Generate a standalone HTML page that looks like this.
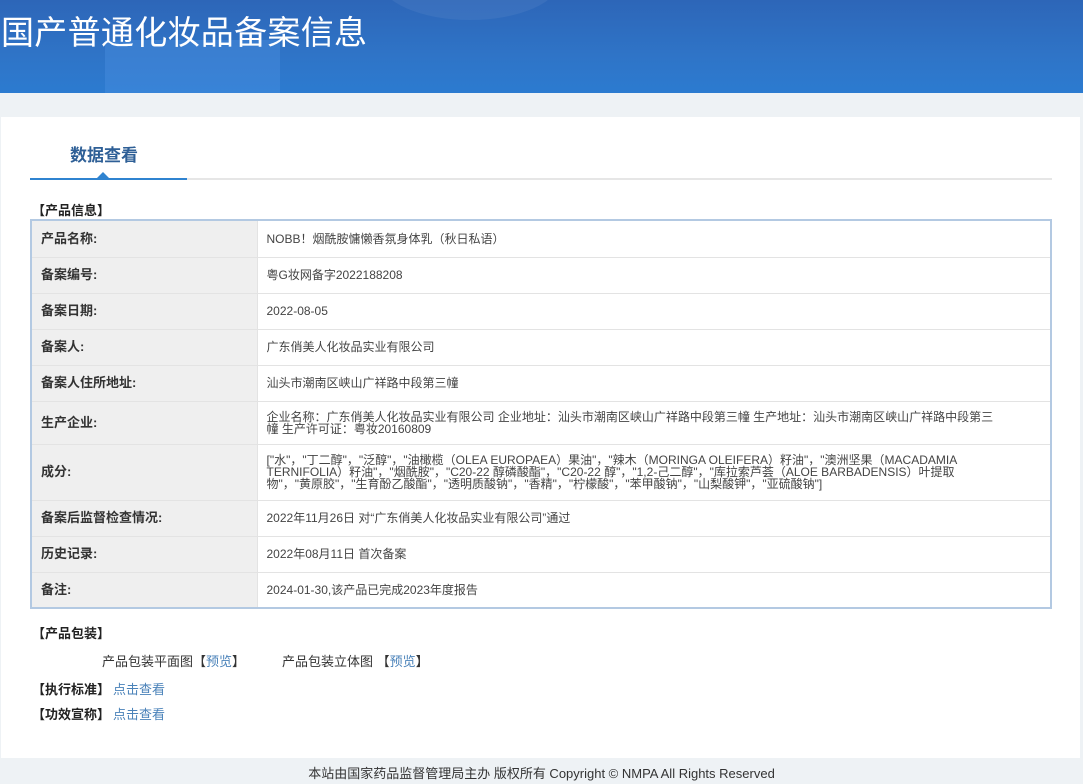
<!DOCTYPE html>
<html><head><meta charset="utf-8"><style>
*{margin:0;padding:0;box-sizing:border-box}
body{width:1083px;height:784px;overflow:hidden;background:#eef2f5;font-family:"Liberation Sans","Noto Sans CJK SC",sans-serif;color:#333;position:relative}
.hd{position:absolute;left:0;top:0;width:1083px;height:93px;background:linear-gradient(180deg,#2d66b8 0%,#2f74c7 60%,#2c7bd0 100%);overflow:hidden}
.hd .b1{position:absolute;left:105px;top:40px;width:175px;height:60px;background:rgba(80,150,230,.35)}
.hd .b2{position:absolute;left:380px;top:-60px;width:180px;height:80px;border-radius:50%;background:rgba(255,255,255,.06)}
.hd h1{position:absolute;left:1px;top:6px;font-size:33px;font-weight:normal;color:#fff;letter-spacing:0.3px;font-family:"Noto Sans CJK SC",sans-serif}
.card{position:absolute;left:1px;top:117px;width:1079px;height:641px;background:#fff}
.tab{position:absolute;left:70px;top:141px;font-size:17px;font-weight:bold;color:#2e5f96;font-family:"Noto Sans CJK SC",sans-serif}
.ln{position:absolute;left:30px;top:178px;width:1022px;height:2px;background:#e6e6e6}
.ln2{position:absolute;left:30px;top:178px;width:157px;height:2px;background:#2f83d0}
.tri{position:absolute;left:97px;top:172px;width:0;height:0;border-left:6px solid transparent;border-right:6px solid transparent;border-bottom:6px solid #2f83d0}
.sec{position:absolute;left:32px;font-size:13px;line-height:16px;font-weight:bold;color:#222}
table{position:absolute;left:30px;top:219px;width:1022px;border-collapse:collapse;border:2px solid #b3c9e2;font-size:12px}
td{border-bottom:1px solid #e3e3e3;padding:0 9px;vertical-align:middle;line-height:12px}
td.l{width:226px;background:#efefef;font-weight:bold;color:#333;font-size:13px;border-right:1px solid #e3e3e3}
td.v{color:#444;padding-right:52px}
.t{position:absolute;font-size:13px;color:#333}
a{color:#4a82b9;text-decoration:none}
.ft{position:absolute;left:0;top:763px;width:1083px;text-align:center;font-size:13px;color:#333}
</style></head><body>
<div class="hd"><div class="b1"></div><div class="b2"></div><h1>国产普通化妆品备案信息</h1></div>
<div class="card"></div>
<div class="tab">数据查看</div>
<div class="ln"></div><div class="ln2"></div><div class="tri"></div>
<div class="sec" style="top:203px">【产品信息】</div>
<table>
<tr style="height:37px"><td class="l">产品名称:</td><td class="v">NOBB！烟酰胺慵懒香氛身体乳（秋日私语）</td></tr>
<tr style="height:36px"><td class="l">备案编号:</td><td class="v">粤G妆网备字2022188208</td></tr>
<tr style="height:36px"><td class="l">备案日期:</td><td class="v">2022-08-05</td></tr>
<tr style="height:36px"><td class="l">备案人:</td><td class="v">广东俏美人化妆品实业有限公司</td></tr>
<tr style="height:36px"><td class="l">备案人住所地址:</td><td class="v">汕头市潮南区峡山广祥路中段第三幢</td></tr>
<tr style="height:43px"><td class="l">生产企业:</td><td class="v">企业名称：广东俏美人化妆品实业有限公司 企业地址：汕头市潮南区峡山广祥路中段第三幢 生产地址：汕头市潮南区峡山广祥路中段第三幢 生产许可证：粤妆20160809</td></tr>
<tr style="height:56px"><td class="l">成分:</td><td class="v">["水"，"丁二醇"，"泛醇"，"油橄榄（OLEA EUROPAEA）果油"，"辣木（MORINGA OLEIFERA）籽油"，"澳洲坚果（MACADAMIA TERNIFOLIA）籽油"，"烟酰胺"，"C20-22 醇磷酸酯"，"C20-22 醇"，"1,2-己二醇"，"库拉索芦荟（ALOE BARBADENSIS）叶提取物"，"黄原胶"，"生育酚乙酸酯"，"透明质酸钠"，"香精"，"柠檬酸"，"苯甲酸钠"，"山梨酸钾"，"亚硫酸钠"]</td></tr>
<tr style="height:36px"><td class="l">备案后监督检查情况:</td><td class="v">2022年11月26日 对“广东俏美人化妆品实业有限公司”通过</td></tr>
<tr style="height:36px"><td class="l">历史记录:</td><td class="v">2022年08月11日 首次备案</td></tr>
<tr style="height:36px"><td class="l">备注:</td><td class="v">2024-01-30,该产品已完成2023年度报告</td></tr>
</table>
<div class="sec" style="top:626px">【产品包装】</div>
<div class="t" style="left:102px;top:651px">产品包装平面图【<a>预览</a>】</div>
<div class="t" style="left:282px;top:651px">产品包装立体图 【<a>预览</a>】</div>
<div class="sec" style="top:682px">【执行标准】<a style="font-weight:normal;margin-left:3px">点击查看</a></div>
<div class="sec" style="top:707px">【功效宣称】<a style="font-weight:normal;margin-left:3px">点击查看</a></div>
<div class="ft">本站由国家药品监督管理局主办 版权所有 Copyright © NMPA All Rights Reserved</div>
</body></html>
